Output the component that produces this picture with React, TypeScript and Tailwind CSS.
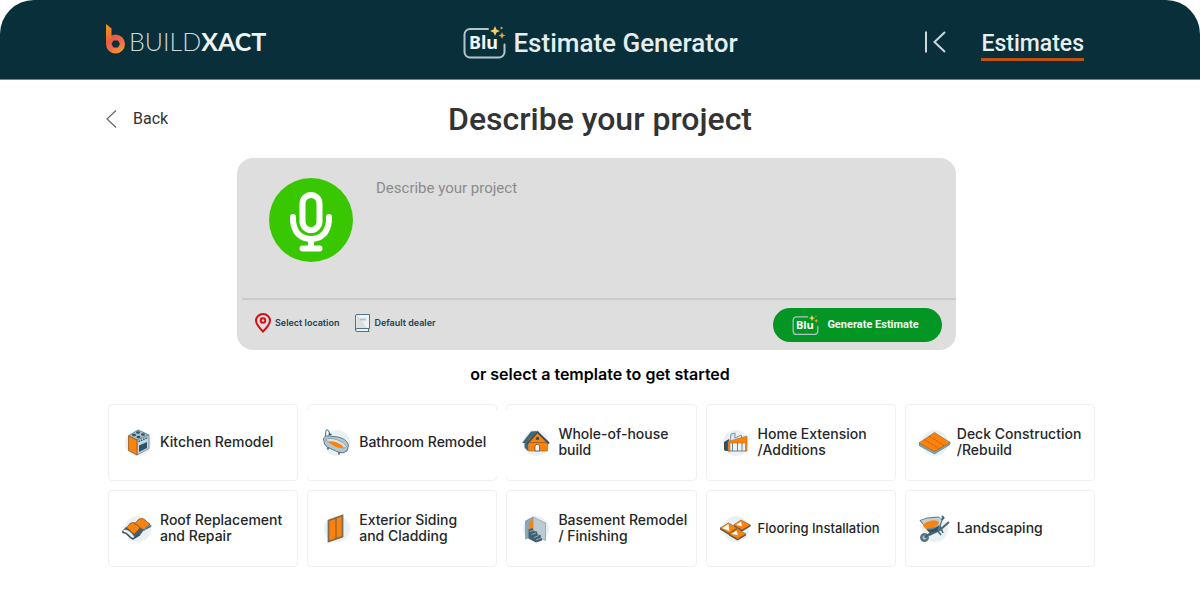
import React from "react";

interface BluBadgeProps {
  className: string;
}

function BluBadge({ className }: BluBadgeProps) {
  return (
    <svg viewBox="0 0 43 34" className={className} role="img" aria-label="Blu">
      <path
        d="M25 3H7a5.500 5.500 0 0 0-5.500 5.500V26a5.500 5.500 0 0 0 5.500 5.500H36A5.500 5.500 0 0 0 41.500 26V18.500"
        fill="none"
        stroke="#b5c5c9"
        strokeWidth="2"
        strokeLinecap="round"
      />
      <text x="6" y="23" fill="#f4f8f9" className="font-['Noto_Sans'] text-[18px] font-bold">
        Blu
      </text>
      <path d="M32 0l1.500 3.500L37 5l-3.500 1.500L32 10l-1.500-3.500L27 5l3.500-1.500z" fill="#f3cd60" />
      <path d="M39 6l1 2.500 2.500 1-2.500 1-1 2.500-1-2.500-2.500-1 2.500-1z" fill="#e8a33c" />
      <circle cx="38.500" cy="2" r="1.200" fill="#b99a4e" />
    </svg>
  );
}

function Logo() {
  return (
    <a href="#" className="flex items-center gap-1 text-[25px] leading-none text-[#f0f4f5] font-['Lato',sans-serif]">
      <svg viewBox="0 0 20 32" className="h-8 w-5" aria-hidden="true">
        <defs>
          <linearGradient id="stem" x1="0" y1="0" x2="0" y2="1">
            <stop offset="0" stopColor="#f79a1e" />
            <stop offset="1" stopColor="#e4573f" />
          </linearGradient>
          <linearGradient id="ring" x1="0.200" y1="0" x2="0.900" y2="1">
            <stop offset="0" stopColor="#e2523f" />
            <stop offset="0.500" stopColor="#ee6a50" />
            <stop offset="1" stopColor="#f9a21b" />
          </linearGradient>
        </defs>
        <path
          d="M10.500 10.500a9.500 9.500 0 1 0 0 19a9.500 9.500 0 0 0 0-19zM8.500 16.500h4.500l2 3.500-2 3.500H8.500l-2-3.500z"
          fill="url(#ring)"
          fillRule="evenodd"
        />
        <path d="M1 0l5.500 4.500V16L1 21z" fill="url(#stem)" />
      </svg>
      <span className="pt-1">
        <span className="font-light text-[#cdd7da]">BUILD</span>
        <span className="font-bold">XACT</span>
      </span>
    </a>
  );
}

const DARK = "#2f5365";
const ORANGE = "#fb830c";

const icons: Record<string, React.ReactNode> = {
  kitchen: (
    <>
      <path d="M6.500 9L16 3l11 5-12 5z" fill="#a9c0cb" stroke={DARK} strokeWidth="0.600" />
      <path d="M15 13l12-5v13.500L15 28z" fill="#c5d5dc" stroke="#6a8795" strokeWidth="0.800" />
      <path d="M6.500 9l8.500 4v15l-8.500-4.500z" fill={ORANGE} stroke="#8a5527" strokeWidth="0.800" />
      <path d="M17 18.500l8-3.500v6l-8 4z" fill={DARK} />
      <path d="M16.500 14.500l9.500-4" stroke={DARK} strokeWidth="1.500" strokeDasharray="1.500 1" />
      <g fill={DARK}>
        <ellipse cx="12" cy="8" rx="2" ry="1.200" />
        <ellipse cx="16" cy="5.500" rx="2" ry="1.200" />
        <ellipse cx="16.500" cy="10" rx="2" ry="1.200" />
        <ellipse cx="21" cy="7.500" rx="2" ry="1.200" />
      </g>
    </>
  ),
  bathroom: (
    <>
      <path d="M4.500 11l.3-6.500Q5.500 1 8 4.500L9 8" fill="none" stroke="#4d7890" strokeWidth="1.100" />
      <path d="M7.500 7.500h3" stroke={DARK} strokeWidth="1.500" />
      <path d="M2.500 12Q3 8.500 8 9l9 1q9 2 10.500 8.500L26 24q-4 3-9 1L6 20q-3-2-3.500-8z" fill="#b5c6cf" stroke="#5b7b8b" />
      <path d="M4.500 13q3-3 11-.5t10 7q-2 3-9 0T4.500 13z" fill="#dbe4e8" stroke="#7893a0" strokeWidth="0.800" />
      <path d="M7 14.500q4-1 9 1t7 5q-5 1-9-1t-7-5z" fill={ORANGE} />
      <path d="M7 20.500v2M18 25.500v2" stroke={DARK} strokeWidth="1.500" />
    </>
  ),
  house: (
    <>
      <path d="M2 16L11 4.500l6-.5-9 12v8l-3.500-3.500V16z" fill="#41677a" />
      <path d="M8.500 24V13L17.500 5l10 9v10z" fill={ORANGE} stroke="#9a5c20" strokeWidth="0.600" />
      <path d="M7 17L17.500 5 29 16.500" fill="none" stroke={DARK} strokeWidth="1.800" />
      <path d="M10 15.500h17" stroke="#8a5527" strokeWidth="0.700" />
      <circle cx="17.500" cy="11.500" r="1.700" fill={DARK} />
      <path d="M15 24v-5q2-3.500 4.500 0v5z" fill="#f5f8f9" stroke={DARK} strokeWidth="0.700" />
    </>
  ),
  extension: (
    <>
      <path d="M10 14l1-7 4-1v5l6-3 1 3" fill="#dce6ea" stroke="#6d8b99" strokeWidth="0.900" />
      <path d="M4 15l5-3v12H5.500L4 23z" fill={DARK} />
      <path d="M9 15.500h17V24H9z" fill="#eef3f5" />
      <path d="M12.500 16v8M17.500 16v8M22 16v8M8 24h18" stroke="#597786" strokeWidth="0.900" />
      <path d="M8 14.500l19-5.500v15h-1.500v-8H10v8H8z" fill={ORANGE} stroke="#a66322" strokeWidth="0.500" />
    </>
  ),
  deck: (
    <>
      <path d="M0 16v2.500L15.500 27 31 17.500V15z" fill="#86a0ad" stroke="#5b7887" strokeWidth="0.600" />
      <path d="M0 16L15.500 5.500 31 15.500 15.500 24.500z" fill={ORANGE} stroke="#a66322" strokeWidth="0.700" />
      <path d="M5 12.500l15 9M10 9l15 9.500" stroke="#9d5c1b" strokeWidth="0.700" strokeDasharray="3 1" />
    </>
  ),
  roof: (
    <>
      <path d="M1 17q3-1 6 1t6 7l6-4 2-3 8-4-1-3-5 3-9-1L4 14z" fill="#42616f" />
      <path d="M1 17.500v2q3 0 5 2.500t5 4l7-4.500" fill="none" stroke="#33505f" strokeWidth="1.500" />
      <path d="M4 15.500L8.500 10q4-1.500 6 1t4 3.500l-6 6.500q-3-1-4.500-3.500T4 15.500z" fill={ORANGE} stroke="#6e4a2c" strokeWidth="0.700" />
      <path d="M12.500 11L17 6q4-1.500 6 1t5 4l-6 6q-3-1-5-3.500T12.500 11z" fill={ORANGE} stroke="#6e4a2c" strokeWidth="0.700" />
      <path d="M22 17.500q3-5.500 7.500-4.500" fill="none" stroke="#6e8b99" strokeWidth="1.500" />
    </>
  ),
  siding: (
    <>
      <path d="M7.500 7.500l14-5v21l-14 5z" fill={ORANGE} stroke="#7b6d58" strokeWidth="1.800" />
      <path d="M15 5v21" stroke="#806646" strokeWidth="1.200" />
    </>
  ),
  basement: (
    <>
      <path d="M5.500 8L13 4v19l-7.500 3z" fill="#8ba7b6" stroke="#63818f" strokeWidth="0.500" />
      <path d="M13 4l12.500 6v17.500L13 22z" fill="#bccbd3" stroke="#7f99a6" strokeWidth="0.700" />
      <path d="M9 9l4-2v9l-4 1.500z" fill={ORANGE} />
      <path d="M8.500 16.500l4-1.500 1.500 3 3 .5.500 3 3 .5.500 3 1 .5v2l-6 2-7.500-4z" fill="#3f6072" />
      <path d="M9.500 18.500l4-1M11.500 21.500l4.500-1.500M14 24.500l5-2M16 27l5-2" stroke="#9bb2be" strokeWidth="0.900" />
    </>
  ),
  flooring: (
    <>
      <g fill="#4d5a5d">
        <path d="M0 15v1.500l9 5.500 8-5.500V15zM14 12v1.500l8 5 8.500-5V12zM9 21v1.500l8.500 5 8.500-5V21z" />
      </g>
      <g fill={ORANGE} stroke="#8c5420" strokeWidth="0.600">
        <path d="M0 15l8.500-5 8.500 5-8 5.500z" />
        <path d="M13.500 12L21 7l9.500 5-8.500 5z" />
        <path d="M9 21l8-5 9 5-8.500 5z" />
      </g>
      <path d="M2 15l6.500-4 1 7zM16 12l5-3.500 1 4.500zM11 21l5.500-3.500L18 22z" fill="#fff" />
    </>
  ),
  landscaping: (
    <>
      <path d="M23 3l1.500 2-3 3M30 9l-9 8-11 5" fill="none" stroke="#466676" strokeWidth="2" />
      <path d="M18 17l4 5M21 13l3 7" stroke="#466676" strokeWidth="1.600" />
      <path d="M1 7.500L8 5l12-1 3 3-3 11-9 1.500z" fill="#6f909f" stroke="#466676" strokeWidth="0.800" />
      <path d="M2 7.500L8 5.500l13-1 1.500 3L20 13 7 15z" fill="#c0d0d7" />
      <path d="M4 13q1-4 6-4.500Q16 6 20 9q0 3-4 4.500T7 16z" fill={ORANGE} />
      <path d="M7 16q7 2 13-4l-1 6-8 2z" fill={DARK} />
      <circle cx="5.500" cy="24.500" r="3.200" fill="#b9c8cf" stroke="#587583" strokeWidth="2.500" />
      <path d="M5.500 24.500l7-5" stroke="#3f5e6d" strokeWidth="1.600" />
    </>
  ),
};

interface Template {
  icon: string;
  lines: string[];
  size?: string;
  // classes for the white panel behind the label, which may cover the side borders
  panel?: string;
}

const templates: Template[] = [
  { icon: "kitchen", lines: ["Kitchen Remodel"] },
  { icon: "bathroom", lines: ["Bathroom Remodel"], panel: "-mx-px px-[14px]" },
  { icon: "house", lines: ["Whole-of-house", "build"], panel: "-ml-px pl-[14px]" },
  { icon: "extension", lines: ["Home Extension", "/Additions"] },
  { icon: "deck", lines: ["Deck Construction", "/Rebuild"] },
  { icon: "roof", lines: ["Roof Replacement", "and Repair"] },
  { icon: "siding", lines: ["Exterior Siding", "and Cladding"] },
  { icon: "basement", lines: ["Basement Remodel", "/ Finishing"] },
  { icon: "flooring", lines: ["Flooring Installation"], size: "text-[13px]" },
  { icon: "landscaping", lines: ["Landscaping"] },
];

function TemplateCard({ icon, lines, size, panel }: Template) {
  return (
    <button type="button" className="flex h-[77px] items-center rounded border border-[#f0f0f0] bg-white text-left">
      <span className={`flex h-[66px] flex-1 items-center gap-1.5 bg-white ${panel ?? "pl-[13px]"}`}>
        <svg viewBox="0 0 32 32" className="size-8 shrink-0" aria-hidden="true">
          <circle cx="16" cy="16" r="13" fill="#ebf0f3" />
          {icons[icon]}
        </svg>
        <span className={`pb-0.5 font-medium whitespace-nowrap text-[#252729] ${size ?? "text-[14px]"}`}>
          {lines.map((line) => (
            <span key={line} className="block leading-4">
              {line}
            </span>
          ))}
        </span>
      </span>
    </button>
  );
}

export default function App() {
  return (
    <div className="bg-white font-['Inter',sans-serif]">
      {/* Top bar */}
      <header className="grid h-20 grid-cols-[1fr_auto_1fr] items-center rounded-t-[34px] border-b border-[#6d858d] bg-[#092f3a] pr-[116px] pl-[105px] font-['Roboto',sans-serif] text-[#e6edef]">
        <Logo />
        <div className="ml-3 flex items-center gap-[7px] pt-1.5">
          <BluBadge className="h-[34px] w-[43px]" />
          <span className="text-[26px] leading-8 font-medium">Estimate Generator</span>
        </div>
        <nav className="flex items-center justify-end gap-[34px] pt-2">
          <button type="button" aria-label="Collapse" className="pb-1">
            <svg viewBox="0 0 24 24" className="size-6" fill="none" stroke="#cdd8db" strokeWidth="2" aria-hidden="true">
              <path d="M3 1.500v21M22 2L11.500 12 22 22" />
            </svg>
          </button>
          <a href="#" className="border-b-3 border-[#c4500f] pt-1 pb-px text-[23px] leading-[26px] font-medium">
            Estimates
          </a>
        </nav>
      </header>

      <main className="pt-5">
        {/* Page title */}
        <div className="grid grid-cols-[1fr_auto_1fr] items-center px-[105px] font-['Roboto',sans-serif] text-[#333]">
          <a href="#" className="flex items-center gap-4 text-base">
            <svg viewBox="0 0 12 20" className="h-5 w-3" fill="none" stroke="#666" strokeWidth="1.200" aria-hidden="true">
              <path d="M11 1.500L2 10l9 8.500" />
            </svg>
            Back
          </a>
          <h1 className="text-[32px] leading-[38px] font-medium">Describe your project</h1>
        </div>

        {/* Prompt box */}
        <form className="mt-5 mr-[244px] ml-[237px] rounded-2xl bg-[#dedede]">
          <div className="flex h-[140px] gap-[23px] pt-5 pr-5 pl-8">
            <button
              type="button"
              aria-label="Record"
              className="flex size-[84px] shrink-0 items-center justify-center rounded-full bg-[#38c700] pt-1"
            >
              <svg viewBox="0 0 44 60" className="h-[60px] w-11" fill="none" stroke="#fff" strokeLinecap="round" aria-hidden="true">
                <rect x="13.500" y="3" width="17" height="35" rx="8.500" strokeWidth="6" />
                <path d="M4 25v4q2 17.500 18 18Q38 46.500 40 29v-4" strokeWidth="6" />
                <path d="M22 47v8" strokeWidth="6" strokeLinecap="butt" />
                <path d="M13.500 56.500h17" strokeWidth="6" />
              </svg>
            </button>
            <textarea
              aria-label="Describe your project"
              placeholder="Describe your project"
              className="h-[110px] flex-1 resize-none bg-transparent font-['Roboto',sans-serif] text-[15px] leading-5 outline-none placeholder:text-[#8b8b8b]"
            />
          </div>
          <hr className="ml-[5px] border-t-2 border-[#cbcbcb]" />
          <div className="flex h-[50px] items-center pr-[14px] pl-[18px] text-[9px] font-semibold text-[#24414d]">
            <button type="button" className="flex items-center gap-1 pb-1">
              <svg viewBox="0 0 16 20" className="h-5 w-4" fill="none" stroke="#d40e14" strokeWidth="2" aria-hidden="true">
                <path d="M8 18.500Q1 11.500 1 7.500a7 6.500 0 0 1 14 0Q15 11.500 8 18.500z" />
                <circle cx="8" cy="7.500" r="2.300" />
              </svg>
              Select location
            </button>
            <button type="button" className="ml-4 flex items-center gap-1 pb-1">
              <svg viewBox="0 0 15 18" className="h-[18px] w-[15px]" fill="none" stroke="#4f7488" aria-hidden="true">
                <path d="M2 .5h12.500v14H2A1.500 1.500 0 0 0 2 17.500h12.500M.5 16V2Q.5.500 2 .5" fill="#edf3f6" />
                <path d="M5 5.500h6" stroke="#b0c2cb" strokeWidth="2" />
                <path d="M13.500 14.500v3" />
              </svg>
              Default dealer
            </button>
            <button
              type="submit"
              className="ml-auto flex h-[34px] w-[169px] items-center justify-center gap-2 rounded-full bg-[#049624] pr-1 font-['Roboto',sans-serif] text-[11px] font-bold text-[#f0faf2]"
            >
              <BluBadge className="h-[21px] w-[27px]" />
              Generate Estimate
            </button>
          </div>
        </form>

        {/* Templates */}
        <h2 className="mt-3 text-center text-base leading-6 font-semibold text-black">or select a template to get started</h2>
        <div className="mt-[18px] mr-[105px] ml-[108px] grid grid-cols-5 gap-[9px]">
          {templates.map((template) => (
            <TemplateCard key={template.icon} {...template} />
          ))}
        </div>
      </main>
    </div>
  );
}
